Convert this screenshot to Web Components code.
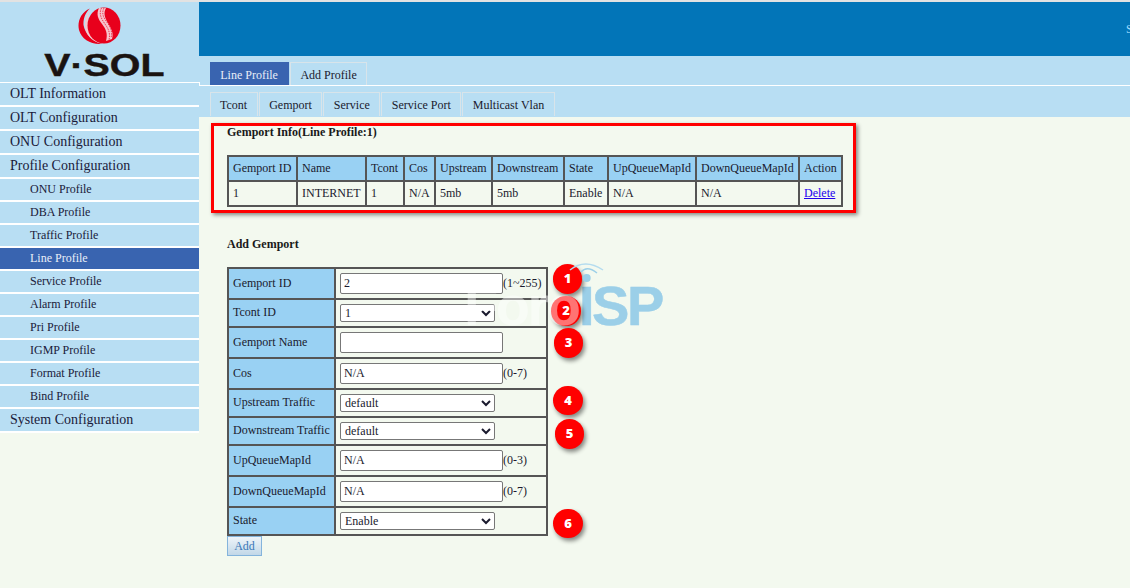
<!DOCTYPE html>
<html>
<head>
<meta charset="utf-8">
<title>Line Profile</title>
<style>
html, body { margin: 0; height: 100%; background: #f3f9ef; overflow: hidden; }
body { font: 12px/1.2 "Liberation Serif", serif; color: #1a1a2e; }
</style>
</head>
<body>

<olt-app>
    <olt-sidebar slot="side"></olt-sidebar>
    <olt-header slot="head"></olt-header>
    <olt-tabs slot="tabs" first items="Line Profile|Add Profile" active="0"></olt-tabs>
    <olt-tabs slot="tabs" items="Tcont|Gemport|Service|Service Port|Multicast Vlan" active="-1"></olt-tabs>
    <gemport-info slot="main"></gemport-info>
    <gemport-form slot="main"></gemport-form>
</olt-app>

<script>
// page frame: sidebar on the left, header + tabs + content on the right
class OltApp extends HTMLElement {
    constructor() {
        super()
        this.attachShadow({ mode: 'open' }).innerHTML = `
        <style>
            :host { display: grid; grid-template-columns: 199px 1fr; height: 586px; border-top: 2px solid #e2e2e2; }
            .right { display: flex; flex-direction: column; min-width: 0; }
            .band { background: linear-gradient(#fff, #fff) 0 26px / 1px 4px no-repeat #b8def3; height: 61px; display: flex; flex-direction: column; }
        </style>
        <slot name="side"></slot>
        <div class="right">
            <slot name="head"></slot>
            <div class="band"><slot name="tabs"></slot></div>
            <slot name="main"></slot>
        </div>`
    }
}

class OltSidebar extends HTMLElement {
    constructor() {
        super()
        const top = t => `<div class="item">${t}</div>`
        const sub = (t, on) => `<div class="item sub${on ? ' on' : ''}">${t}</div>`
        this.attachShadow({ mode: 'open' }).innerHTML = `
        <style>
            :host { display: block; }
            .logo { height: 80px; background: #b8def3; border-bottom: 1px solid #fff; display: flex; flex-direction: column; align-items: center; }
            svg { display: block; margin-top: 5px; margin-left: 0; }
            .brand { font: bold 31px/1 "Liberation Sans", sans-serif; color: #1a1311; -webkit-text-stroke: .4px #1a1311; transform: scaleX(1.27); margin-top: 5px; white-space: nowrap; margin-left: 9px; }
            .item { height: 22px; line-height: 21px; background: #b8def3; border-bottom: 2px solid #fff; padding-left: 10px; font-size: 14px; color: #1a1a3a; }
            .sub { height: 21px; line-height: 21px; padding-left: 30px; font-size: 12px; }
            .on { background: #3964b0; color: #e8eef8; }
        </style>
        <div class="logo">
            <svg width="43" height="38" viewBox="0 0 43 38">
                <path d="M12 1.500C3 5-1 15 1 23c2.500 9 12 15 23 14C14 34 7 27 5.500 18 5 11 8 5 12 1.500z" fill="#e8001c"/>
                <path d="M12 3C7 9 6 18 8 24c2 6 8 11 15 12.500C15 31 10 24 10 16c0-6 1-10 2-13z" fill="#f7c8d0"/>
                <ellipse cx="26" cy="18.500" rx="16.500" ry="18" fill="#e8001c"/>
                <path d="M21 1c-3 6-1 11 3 16s6 10 4 17l6-2c2-6-1-11-4-16s-5-10-2-15z" fill="#f6c3cc"/>
                <path d="M23.500 1c-3 6 0 11 3.500 16s5.500 9 4 16M26 1c-3 6 0 10 3.500 15s5 9 3.500 15" fill="none" stroke="#e8001c" stroke-width=".7" stroke-dasharray="1.500 1"/>
            </svg>
            <div class="brand">V·SOL</div>
        </div>
        ${top('OLT Information')}${top('OLT Configuration')}${top('ONU Configuration')}${top('Profile Configuration')}
        ${sub('ONU Profile')}${sub('DBA Profile')}${sub('Traffic Profile')}${sub('Line Profile', true)}${sub('Service Profile')}
        ${sub('Alarm Profile')}${sub('Pri Profile')}${sub('IGMP Profile')}${sub('Format Profile')}${sub('Bind Profile')}
        ${top('System Configuration')}`
    }
}

class OltHeader extends HTMLElement {
    constructor() {
        super()
        this.attachShadow({ mode: 'open' }).innerHTML = `
        <style>
            :host { display: flex; justify-content: flex-end; align-items: center; height: 54px; background: #0275b8; overflow: hidden; }
            span { width: 4px; color: #9fdcff; font-size: 12px; overflow: hidden; }
        </style>
        <span>S</span>`
    }
}

class OltTabs extends HTMLElement {
    constructor() {
        super()
        const active = +this.getAttribute('active')
        const tabs = this.getAttribute('items').split('|')
            .map((t, i) => `<div class="tab${i === active ? ' on' : ''}">${t}</div>`).join('')
        const first = this.hasAttribute('first')
        this.attachShadow({ mode: 'open' }).innerHTML = `
        <style>
            :host { display: flex; gap: 1px; padding: 6px 0 0 10.500px; ${first ? 'border-bottom: 1px solid #fff;' : ''} }
            .tab { height: ${first ? 22 : 23}px; line-height: 24px; padding: 0 ${first ? 9.75 : 9.5}px; border: 1px solid #d8e4ea; border-bottom: 0; font-size: 12px; color: #1a1a2e; }
            .on { background: #3964b0; color: #e8eef8; border-color: #3964b0; }
        </style>
        ${tabs}`
    }
}

const TABLE_CSS = `
    table { border-collapse: collapse; font-size: 12px; color: #1a1a2e; }
    td { border: 2px solid #555; padding: 0 4px; }
    .h { background: #99d1f3; }
`

class GemportInfo extends HTMLElement {
    constructor() {
        super()
        const head = ['Gemport ID', 'Name', 'Tcont', 'Cos', 'Upstream', 'Downstream', 'State', 'UpQueueMapId', 'DownQueueMapId', 'Action']
        const row = ['1', 'INTERNET', '1', 'N/A', '5mb', '5mb', 'Enable', 'N/A', 'N/A', '<a href="#">Delete</a>']
        const widths = [69, 69, 38, 31, 57, 72, 44, 88, 103, 43]
        this.attachShadow({ mode: 'open' }).innerHTML = `
        <style>
            :host { display: block; width: 626px; height: 84px; margin: 6px 0 1px 12px; border: 3px solid #f00; box-shadow: 2px 2px 4px rgba(0,0,0,.45); padding: 0 0 0 13px; }
            b { display: block; margin-top: -1px; font-size: 12px; line-height: 14px; color: #1a1a1a; }
            ${TABLE_CSS}
            table { margin: 16px 0 0 0; table-layout: fixed; width: 614px; }
            tr { height: 25px; }
            a { color: #2200ee; }
        </style>
        <b>Gemport Info(Line Profile:1)</b>
        <table>
            <colgroup>${widths.map(w => `<col style="width:${w}px">`).join('')}</colgroup>
            <tr>${head.map(t => `<td class="h">${t}</td>`).join('')}</tr>
            <tr>${row.map(t => `<td>${t}</td>`).join('')}</tr>
        </table>`
    }
}

class GemportForm extends HTMLElement {
    constructor() {
        super()
        const input = (v, hint) => `<input value="${v}">${hint ? `<span>${hint}</span>` : ''}`
        const select = v => `<select><option>${v}</option></select>`
        const rows = [
            ['Gemport ID', input('2', '(1~255)'), 31],
            ['Tcont ID', select('1'), 28, true],
            ['Gemport Name', input(''), 31],
            ['Cos', input('N/A', '(0-7)'), 31],
            ['Upstream Traffic', select('default'), 28, true],
            ['Downstream Traffic', select('default'), 28, true],
            ['UpQueueMapId', input('N/A', '(0-3)'), 31],
            ['DownQueueMapId', input('N/A', '(0-7)'), 31],
            ['State', select('Enable'), 28, true]
        ]
        const badges = [[567.5, 279], [566, 311], [568.5, 343], [568, 400.5], [569.5, 434], [568, 523.5]]
            .map(([x, y], i) => `<i style="left:${x - 199}px;top:${y - 214}px">${i + 1}</i>`).join('')
        this.attachShadow({ mode: 'open' }).innerHTML = `
        <style>
            :host { display: block; position: relative; flex: 1; }
            h4 { margin: 0; padding: 23px 0 0 28px; font-size: 12px; line-height: 14px; color: #1a1a1a; }
            ${TABLE_CSS}
            table { margin: 16px 0 0 28px; table-layout: fixed; width: 319px; }
            td.h.s { padding-bottom: 2px; }
            td.v { padding: 0 0 0 4px; white-space: nowrap; }
            input { box-sizing: border-box; width: 163px; height: 21px; padding: 1px 3px; border: 1px solid #777; border-radius: 2px; background: #fff; font: 12px "Liberation Serif", serif; color: #1a1a2e; vertical-align: middle; outline: 0; }
            select { box-sizing: border-box; width: 155px; height: 18px; border: 1px solid #777; border-radius: 2px; background: #fff; font: 12px "Liberation Serif", serif; color: #1a1a2e; vertical-align: middle; }
            span { vertical-align: middle; }
            button { display: block; margin: 0 0 0 28px; box-sizing: border-box; width: 35px; height: 20px; padding: 0; border: 1px solid #84b4dc; background: linear-gradient(#eef4f9, #c2d8e8); font: 12px "Liberation Serif", serif; color: #3a78b8; }
            i { position: absolute; box-sizing: border-box; width: 29.500px; height: 29.500px; margin: -14.750px 0 0 -14.750px; border-radius: 50%; background: #f00; color: #fff; font: 800 13px/29.500px "Open Sans", "Liberation Sans", sans-serif; text-align: center; box-shadow: 2px 3px 4px rgba(0,0,0,.45); }
            .mark { position: absolute; top: 64px; pointer-events: none; font: bold 56px/1 "Liberation Sans", sans-serif; white-space: nowrap; }
            .isp { left: 380px; color: #9bcfe8; letter-spacing: -2.500px; -webkit-text-stroke: .5px #9bcfe8; }
            .foro { left: 265px; color: rgba(255,255,255,.45); letter-spacing: -2.500px; }
            svg { position: absolute; left: 366px; top: 44px; }
        </style>
        <h4>Add Gemport</h4>
        <table>
            <colgroup><col style="width:107px"><col style="width:212px"></colgroup>
            ${rows.map(([l, c, h, s]) => `<tr style="height:${h}px"><td class="h${s ? ' s' : ''}">${l}</td><td class="v">${c}</td></tr>`).join('')}
        </table>
        <button>Add</button>
        <div class="mark isp">ISP</div>
        ${badges}
        <div class="mark foro">Foro</div>
        <svg width="42" height="26" viewBox="0 0 42 26" fill="none" stroke="#9bcfe8" stroke-width="1.500">
            <path d="M5 12Q20 0 38 12" stroke="#b4dcef"/><path d="M16 14q6-7 16 1"/><circle cx="21.700" cy="20" r="4" fill="#9bcfe8" stroke="none"/>
        </svg>`
    }
}

customElements.define('olt-app', OltApp)
customElements.define('olt-sidebar', OltSidebar)
customElements.define('olt-header', OltHeader)
customElements.define('olt-tabs', OltTabs)
customElements.define('gemport-info', GemportInfo)
customElements.define('gemport-form', GemportForm)
</script>
</body>
</html>
